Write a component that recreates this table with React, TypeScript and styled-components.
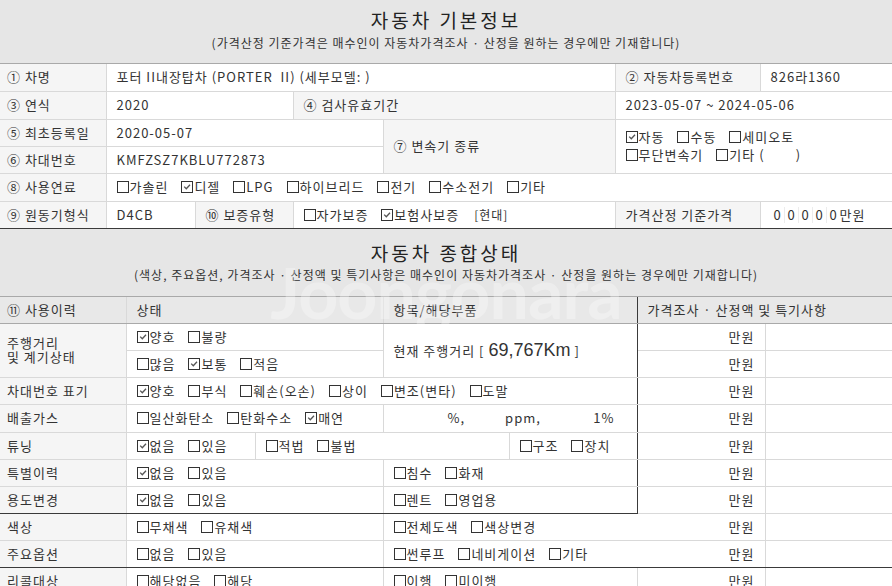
import React from 'react';
import styled, { createGlobalStyle } from 'styled-components';

const GlobalStyle = createGlobalStyle`
  html, body { margin: 0; padding: 0; background: #fff; }
  body {
    font-family: "Noto Sans CJK KR", "Noto Sans", sans-serif;
    color: #333;
    font-size: 13px;
  }
`;

type Edge = 'light' | 'mid' | 'dark' | 'none';
const edge = (e?: Edge) =>
  e === 'none'
    ? 'none'
    : e === 'dark'
    ? '1px solid #3a3a3a'
    : e === 'mid'
    ? '1px solid #a9a9a9'
    : '1px solid #d9d9d9';

const Page = styled.div`
  width: 892px;
  position: relative;
  overflow: hidden;
`;

const SectionHeader = styled.div<{ $h: number; $pt: number; $gap: number; $topDark?: boolean }>`
  height: ${(p) => p.$h}px;
  box-sizing: border-box;
  padding-top: ${(p) => p.$pt}px;
  background: #e6e6e6;
  border-top: ${(p) => (p.$topDark ? '1px solid #3a3a3a' : 'none')};
  border-bottom: 1px solid #a9a9a9;
  display: flex;
  flex-direction: column;
  align-items: center;
  gap: ${(p) => p.$gap}px;
`;

const Title = styled.h2`
  margin: 0;
  font-size: 19px;
  font-weight: 400;
  letter-spacing: 3px;
  line-height: 24px;
  color: #222;
`;

const Subtitle = styled.p`
  margin: 0;
  font-size: 12px;
  line-height: 16px;
  letter-spacing: 1px;
  color: #333;
`;

const Table = styled.table`
  width: 892px;
  table-layout: fixed;
  border-collapse: collapse;
  border-style: hidden;
`;

const Col = styled.col<{ $w: number }>`
  width: ${(p) => p.$w}px;
`;

const Tr = styled.tr<{ $h: number }>`
  height: ${(p) => p.$h}px;
`;

const Td = styled.td<{
  $tone?: 'label' | 'head' | 'plain';
  $r?: Edge;
  $b?: Edge;
  $pl?: number;
  $align?: 'left' | 'right';
}>`
  border-top: none;
  border-left: none;
  border-right: ${(p) => edge(p.$r)};
  border-bottom: ${(p) => edge(p.$b)};
  background: ${(p) =>
    p.$tone === 'label' ? '#f5f5f5' : p.$tone === 'head' ? '#e8e8e8' : '#fff'};
  padding: 0 10px 0 ${(p) => p.$pl ?? 10}px;
  text-align: ${(p) => p.$align ?? 'left'};
  vertical-align: middle;
  white-space: nowrap;
  overflow: hidden;
  font-size: 13px;
  line-height: 16px;
  letter-spacing: 1px;
  color: #333;
`;

const TwoLine = styled.div`
  line-height: 14px;
`;

const Opts = styled.div`
  display: flex;
  align-items: center;
  gap: 13px;
  line-height: 16px;
`;

const Stack = styled.div`
  display: flex;
  flex-direction: column;
  gap: 2px;
`;

const Opt = styled.span`
  display: inline-flex;
  align-items: center;
  white-space: nowrap;
`;

const Box = styled.span`
  display: inline-flex;
  align-items: center;
  justify-content: center;
  width: 12px;
  height: 12px;
  box-sizing: border-box;
  border: 1px solid #333;
  background: #fff;
  margin-right: 1px;
  flex: none;
`;

const Small = styled.span`
  font-size: 12px;
  margin-left: 2px;
`;

const Big = styled.span`
  font-family: "Liberation Sans", Arial, sans-serif;
  font-size: 18px;
  letter-spacing: 0;
  margin: 0 4px;
  color: #333;
`;

const Emission = styled.div`
  display: flex;
  justify-content: flex-end;
  padding-right: 12px;
`;

const EmSpan = styled.span<{ $w: number }>`
  width: ${(p) => p.$w}px;
  text-align: right;
`;

const Digits = styled.span`
  display: inline-flex;
  align-items: center;
`;

const Digit = styled.span`
  display: inline-block;
  width: 13px;
  text-align: center;
  letter-spacing: 0;
  border-right: 1px solid #ececec;
  &:last-of-type {
    border-right: none;
  }
`;

const Watermark = styled.div`
  position: absolute;
  left: 0;
  right: 0;
  top: 257px;
  text-align: center;
  font-family: Lato, "Noto Sans", sans-serif;
  font-weight: 700;
  font-size: 70px;
  line-height: 70px;
  letter-spacing: -1px;
  color: rgba(255, 255, 255, 0.3);
  pointer-events: none;
`;

function Check({ on, children }: { on?: boolean; children: React.ReactNode }) {
  return (
    <Opt>
      <Box>
        {on && (
          <svg width="10" height="10" viewBox="0 0 10 10">
            <polyline
              points="2.2,4.6 4.3,6.8 8,2.8"
              fill="none"
              stroke="#555"
              strokeWidth="1.3"
            />
          </svg>
        )}
      </Box>
      {children}
    </Opt>
  );
}

const Won = () => (
  <>
    <Td $align="right" $r="light">
      만원
    </Td>
    <Td />
  </>
);

export default function App() {
  return (
    <>
      <GlobalStyle />
      <Page>
        <SectionHeader $h={64} $pt={8} $gap={3}>
          <Title>자동차 기본정보</Title>
          <Subtitle>
            (가격산정 기준가격은 매수인이 자동차가격조사 · 산정을 원하는 경우에만 기재합니다)
          </Subtitle>
        </SectionHeader>

        <Table>
          <colgroup>
            {[106, 89, 98, 90, 232, 145, 132].map((w, i) => (
              <Col key={i} $w={w} />
            ))}
          </colgroup>
          <tbody>
            <Tr $h={27}>
              <Td $tone="label" $pl={7}>① 차명</Td>
              <Td colSpan={4}>포터 II내장탑차 (PORTER&nbsp;&nbsp;II) (세부모델: )</Td>
              <Td $tone="label">② 자동차등록번호</Td>
              <Td>826라1360</Td>
            </Tr>
            <Tr $h={28}>
              <Td $tone="label" $pl={7}>③ 연식</Td>
              <Td colSpan={2}>2020</Td>
              <Td $tone="label" colSpan={2}>④ 검사유효기간</Td>
              <Td colSpan={2}>2023-05-07 ~ 2024-05-06</Td>
            </Tr>
            <Tr $h={27}>
              <Td $tone="label" $pl={7}>⑤ 최초등록일</Td>
              <Td colSpan={3}>2020-05-07</Td>
              <Td $tone="label" rowSpan={2}>⑦ 변속기 종류</Td>
              <Td colSpan={2} rowSpan={2}>
                <Stack>
                  <Opts>
                    <Check on>자동</Check>
                    <Check>수동</Check>
                    <Check>세미오토</Check>
                  </Opts>
                  <Opts>
                    <Check>무단변속기</Check>
                    <Check>기타 (&nbsp;&nbsp;&nbsp;&nbsp;&nbsp;&nbsp;&nbsp;&nbsp;)</Check>
                  </Opts>
                </Stack>
              </Td>
            </Tr>
            <Tr $h={27}>
              <Td $tone="label" $pl={7}>⑥ 차대번호</Td>
              <Td colSpan={3}>KMFZSZ7KBLU772873</Td>
            </Tr>
            <Tr $h={28}>
              <Td $tone="label" $pl={7}>⑧ 사용연료</Td>
              <Td colSpan={6}>
                <Opts>
                  <Check>가솔린</Check>
                  <Check on>디젤</Check>
                  <Check>LPG</Check>
                  <Check>하이브리드</Check>
                  <Check>전기</Check>
                  <Check>수소전기</Check>
                  <Check>기타</Check>
                </Opts>
              </Td>
            </Tr>
            <Tr $h={27}>
              <Td $tone="label" $pl={7}>⑨ 원동기형식</Td>
              <Td>D4CB</Td>
              <Td $tone="label">⑩ 보증유형</Td>
              <Td colSpan={2}>
                <Opts>
                  <Check>자가보증</Check>
                  <Check on>보험사보증</Check>
                  <Small>[현대]</Small>
                </Opts>
              </Td>
              <Td $tone="label">가격산정 기준가격</Td>
              <Td>
                <Digits>
                  {[0, 0, 0, 0, 0].map((d, i) => (
                    <Digit key={i}>{d}</Digit>
                  ))}
                  만원
                </Digits>
              </Td>
            </Tr>
          </tbody>
        </Table>

        <SectionHeader $h={69} $pt={12} $gap={2} $topDark>
          <Title>자동차 종합상태</Title>
          <Subtitle>
            (색상, 주요옵션, 가격조사 · 산정액 및 특기사항은 매수인이 자동차가격조사 · 산정을 원하는 경우에만 기재합니다)
          </Subtitle>
        </SectionHeader>

        <Table>
          <colgroup>
            {[126, 129, 128, 126, 128, 128, 127].map((w, i) => (
              <Col key={i} $w={w} />
            ))}
          </colgroup>
          <tbody>
            <Tr $h={26}>
              <Td $tone="head" $pl={7} $b="mid">⑪ 사용이력</Td>
              <Td $tone="head" colSpan={2} $b="mid">상태</Td>
              <Td $tone="head" colSpan={2} $b="mid" $r="dark">항목/해당부품</Td>
              <Td $tone="head" colSpan={2} $b="mid">가격조사 · 산정액 및 특기사항</Td>
            </Tr>
            <Tr $h={27}>
              <Td $tone="label" $pl={7} rowSpan={2}>
                <TwoLine>
                  주행거리
                  <br />및 계기상태
                </TwoLine>
              </Td>
              <Td colSpan={2}>
                <Opts>
                  <Check on>양호</Check>
                  <Check>불량</Check>
                </Opts>
              </Td>
              <Td colSpan={2} rowSpan={2} $r="dark">
                현재 주행거리 [<Big>69,767Km</Big>]
              </Td>
              <Won />
            </Tr>
            <Tr $h={27}>
              <Td colSpan={2}>
                <Opts>
                  <Check>많음</Check>
                  <Check on>보통</Check>
                  <Check>적음</Check>
                </Opts>
              </Td>
              <Won />
            </Tr>
            <Tr $h={27}>
              <Td $tone="label" $pl={7}>차대번호 표기</Td>
              <Td colSpan={4} $r="dark">
                <Opts>
                  <Check on>양호</Check>
                  <Check>부식</Check>
                  <Check>훼손(오손)</Check>
                  <Check>상이</Check>
                  <Check>변조(변타)</Check>
                  <Check>도말</Check>
                </Opts>
              </Td>
              <Won />
            </Tr>
            <Tr $h={28}>
              <Td $tone="label" $pl={7}>배출가스</Td>
              <Td colSpan={2}>
                <Opts>
                  <Check>일산화탄소</Check>
                  <Check>탄화수소</Check>
                  <Check on>매연</Check>
                </Opts>
              </Td>
              <Td colSpan={2} $r="dark">
                <Emission>
                  <EmSpan $w={72}>%,</EmSpan>
                  <EmSpan $w={76}>ppm,</EmSpan>
                  <EmSpan $w={74}>1%</EmSpan>
                </Emission>
              </Td>
              <Won />
            </Tr>
            <Tr $h={27}>
              <Td $tone="label" $pl={7}>튜닝</Td>
              <Td>
                <Opts>
                  <Check on>없음</Check>
                  <Check>있음</Check>
                </Opts>
              </Td>
              <Td colSpan={2}>
                <Opts>
                  <Check>적법</Check>
                  <Check>불법</Check>
                </Opts>
              </Td>
              <Td $r="dark">
                <Opts>
                  <Check>구조</Check>
                  <Check>장치</Check>
                </Opts>
              </Td>
              <Won />
            </Tr>
            <Tr $h={27}>
              <Td $tone="label" $pl={7}>특별이력</Td>
              <Td colSpan={2}>
                <Opts>
                  <Check on>없음</Check>
                  <Check>있음</Check>
                </Opts>
              </Td>
              <Td colSpan={2} $r="dark">
                <Opts>
                  <Check>침수</Check>
                  <Check>화재</Check>
                </Opts>
              </Td>
              <Won />
            </Tr>
            <Tr $h={27}>
              <Td $tone="label" $pl={7} $b="dark">용도변경</Td>
              <Td colSpan={2} $b="dark">
                <Opts>
                  <Check on>없음</Check>
                  <Check>있음</Check>
                </Opts>
              </Td>
              <Td colSpan={2} $r="dark" $b="dark">
                <Opts>
                  <Check>렌트</Check>
                  <Check>영업용</Check>
                </Opts>
              </Td>
              <Won />
            </Tr>
            <Tr $h={27}>
              <Td $tone="label" $pl={7}>색상</Td>
              <Td colSpan={2}>
                <Opts>
                  <Check>무채색</Check>
                  <Check>유채색</Check>
                </Opts>
              </Td>
              <Td colSpan={2} $r="none">
                <Opts>
                  <Check>전체도색</Check>
                  <Check>색상변경</Check>
                </Opts>
              </Td>
              <Won />
            </Tr>
            <Tr $h={27}>
              <Td $tone="label" $pl={7} $b="dark">주요옵션</Td>
              <Td colSpan={2} $b="dark">
                <Opts>
                  <Check>없음</Check>
                  <Check>있음</Check>
                </Opts>
              </Td>
              <Td colSpan={2} $r="none" $b="dark">
                <Opts>
                  <Check>썬루프</Check>
                  <Check>네비게이션</Check>
                  <Check>기타</Check>
                </Opts>
              </Td>
              <Td $align="right" $b="dark">만원</Td>
              <Td $b="dark" />
            </Tr>
            <Tr $h={27}>
              <Td $tone="label" $pl={7}>리콜대상</Td>
              <Td colSpan={2}>
                <Opts>
                  <Check>해당없음</Check>
                  <Check>해당</Check>
                </Opts>
              </Td>
              <Td colSpan={2}>
                <Opts>
                  <Check>이행</Check>
                  <Check>미이행</Check>
                </Opts>
              </Td>
              <Won />
            </Tr>
          </tbody>
        </Table>
        <Watermark>Joongonara</Watermark>
      </Page>
    </>
  );
}
